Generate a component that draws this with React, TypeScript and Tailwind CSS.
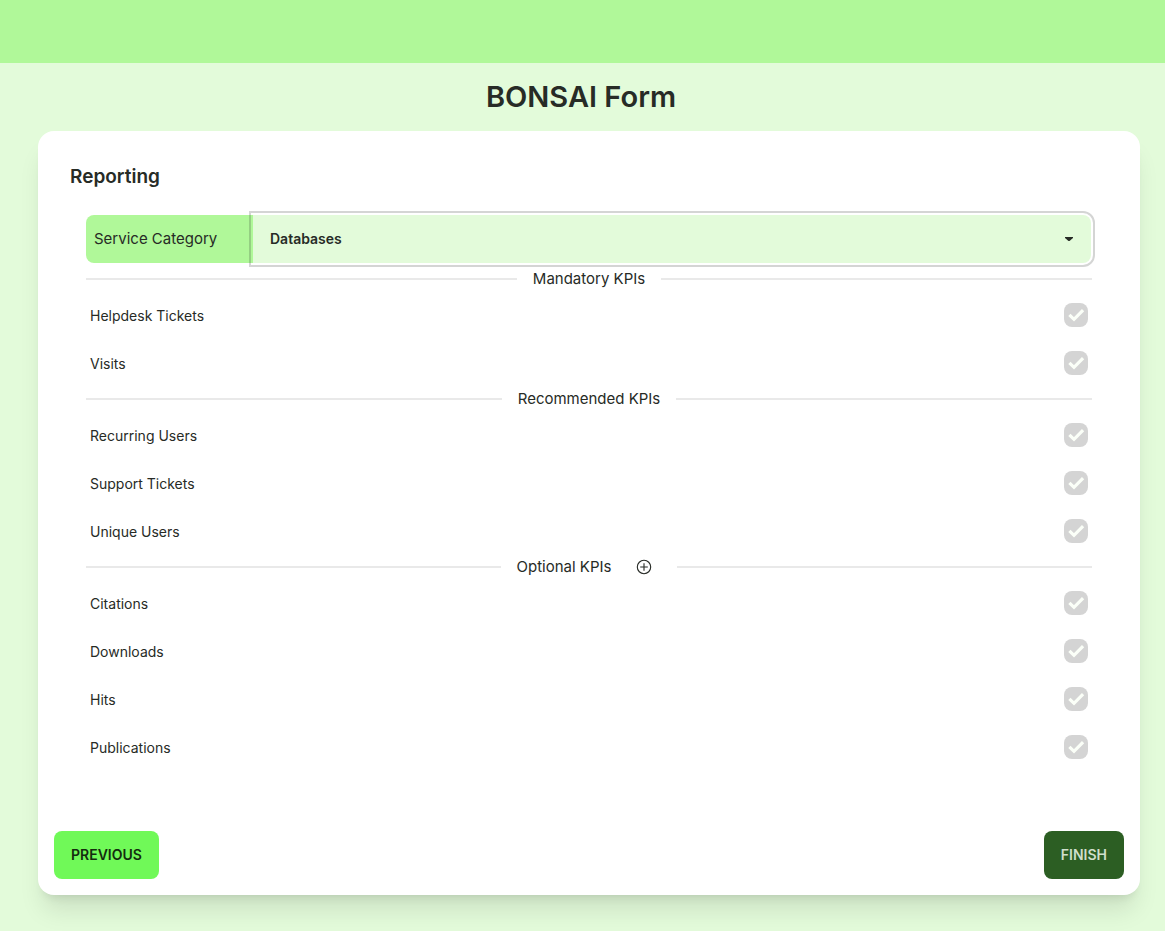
import { useState } from "react";

type KpiGroup = { title: string; items: string[]; canAdd?: boolean };

const groups: KpiGroup[] = [
  { title: "Mandatory KPIs", items: ["Helpdesk Tickets", "Visits"] },
  { title: "Recommended KPIs", items: ["Recurring Users", "Support Tickets", "Unique Users"] },
  { title: "Optional KPIs", items: ["Citations", "Downloads", "Hits", "Publications"], canAdd: true },
];

function KpiRow({ name }: { name: string }) {
  return (
    <label className="flex h-12 items-center justify-between px-1">
      <span className="pt-0.5 text-sm">{name}</span>
      <span className="grid size-6">
        <input
          type="checkbox"
          defaultChecked
          disabled
          className="col-start-1 row-start-1 size-6 appearance-none rounded-lg bg-[#d4d4d4]"
        />
        <svg viewBox="0 0 24 24" fill="none" className="pointer-events-none col-start-1 row-start-1 size-6" aria-hidden="true">
          <path d="M5.4 11.8 10 16.3 19.1 7.2" stroke="#fbfff8" strokeWidth="3.2" />
        </svg>
      </span>
    </label>
  );
}

function GroupDivider({ title, canAdd }: { title: string; canAdd?: boolean }) {
  return (
    <div className="flex h-6 items-center gap-4">
      <div className="h-0.5 flex-1 bg-[#e9e9e9]" />
      <h3 className="flex items-center text-[15px] leading-6">
        {title}
        {canAdd && (
          <button type="button" aria-label="Add optional KPI" className="ml-4 px-2">
            <svg viewBox="0 0 18 18" fill="none" stroke="currentColor" strokeWidth="1.1" className="size-[18px]" aria-hidden="true">
              <circle cx="9" cy="9" r="6.7" />
              <path d="M9 5.2v7.6M5.2 9h7.6" />
            </svg>
          </button>
        )}
      </h3>
      <div className="h-0.5 flex-1 bg-[#e9e9e9]" />
    </div>
  );
}

export default function App() {
  const [category, setCategory] = useState("Databases");
  return (
    <div className="min-h-screen bg-[#e3fbda] pb-9 font-['Inter',sans-serif] text-[#272b26]">
      <header className="h-[63px] bg-[#b0f899]" />
      <main className="pr-[25px] pl-[38px]">
        <h1 className="mr-4 py-4 text-center text-[29px] leading-9 font-semibold">BONSAI Form</h1>
        <section className="rounded-2xl bg-white p-4 shadow-[0_20px_25px_-5px_rgba(0,0,0,0.1),0_8px_10px_-6px_rgba(0,0,0,0.1)]">
          <div className="px-4 pt-4">
            <h2 className="text-[19px] leading-7 font-semibold">Reporting</h2>
            <form className="px-4 pt-6">
              <div className="mb-1 flex h-12 pr-px">
                <label htmlFor="category" className="flex w-[167px] items-center rounded-l-lg bg-[#b0f899] px-2 text-[15px] leading-6">
                  Service Category
                </label>
                <div className="grid min-w-0 flex-1">
                  <select
                    id="category"
                    value={category}
                    onChange={(e) => setCategory(e.target.value)}
                    className="col-start-1 row-start-1 h-12 appearance-none rounded-r-lg bg-[#e3fbda] pr-10 pl-[17px] text-sm font-semibold outline-2 outline-offset-2 outline-[#272b26]/20"
                  >
                    <option>Databases</option>
                  </select>
                  <svg viewBox="0 0 8 4" className="pointer-events-none col-start-1 row-start-1 mr-[18px] h-1 w-2 self-center justify-self-end" aria-hidden="true">
                    <path d="M0 0h8v1L4.5 4h-1L0 1z" fill="currentColor" />
                  </svg>
                </div>
              </div>
              {groups.map((group) => (
                <div key={group.title}>
                  <GroupDivider title={group.title} canAdd={group.canAdd} />
                  {group.items.map((name) => (
                    <KpiRow key={name} name={name} />
                  ))}
                </div>
              ))}
            </form>
          </div>
          <div className="mt-[60px] flex justify-between">
            <button type="button" className="h-12 rounded-lg bg-[#70f958] px-[17px] text-sm font-semibold text-[#142c0f]">
              PREVIOUS
            </button>
            <button type="button" className="h-12 rounded-lg bg-[#2c5e23] px-[17px] text-sm font-semibold text-[#d0dfcc]">
              FINISH
            </button>
          </div>
        </section>
      </main>
    </div>
  );
}
